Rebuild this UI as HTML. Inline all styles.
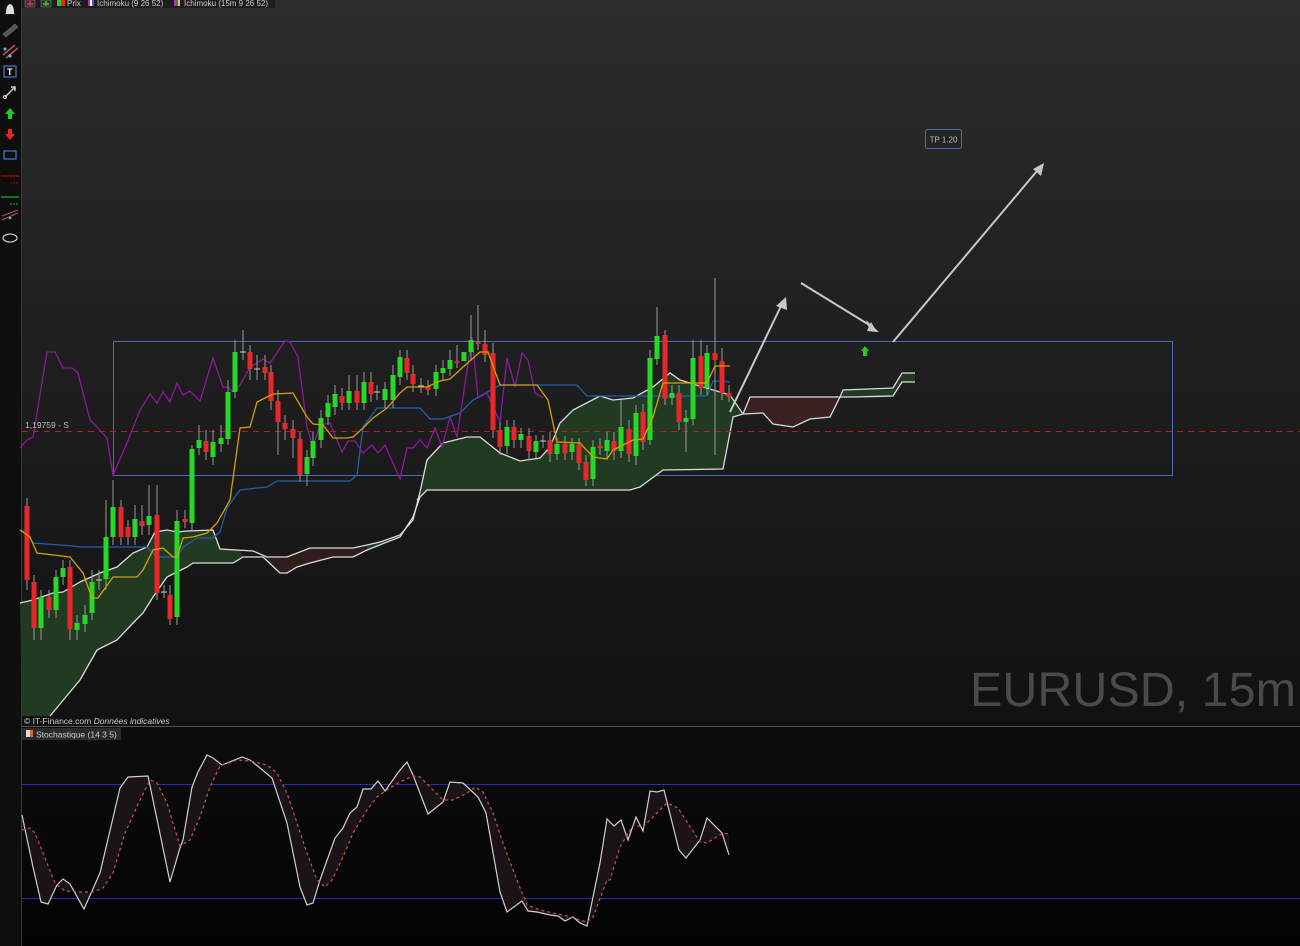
<!DOCTYPE html>
<html><head><meta charset="utf-8"><style>
html,body{margin:0;padding:0;background:#000;}
body{width:1300px;height:946px;overflow:hidden;position:relative;font-family:"Liberation Sans",sans-serif;}
svg{position:absolute;left:0;top:0;}
</style></head><body>
<svg width="1300" height="946" viewBox="0 0 1300 946" xmlns="http://www.w3.org/2000/svg" font-family="Liberation Sans, sans-serif">
<defs>
<linearGradient id="bg" x1="0" y1="0" x2="0" y2="1"><stop offset="0" stop-color="#2c2c2c"/><stop offset="1" stop-color="#111"/></linearGradient>
<linearGradient id="bg2" x1="0" y1="0" x2="0" y2="1"><stop offset="0" stop-color="#0d0d0d"/><stop offset="1" stop-color="#030303"/></linearGradient>
</defs>
<rect x="0" y="0" width="1300" height="726" fill="url(#bg)"/>
<rect x="0" y="727" width="1300" height="219" fill="url(#bg2)"/>
<line x1="22" y1="726.5" x2="1300" y2="726.5" stroke="#555" stroke-width="1"/>
<!-- left toolbar -->
<rect x="0" y="0" width="21" height="946" fill="#0e0e0e"/>
<line x1="21.5" y1="0" x2="21.5" y2="946" stroke="#3a3a3a"/>
<path d="M6 13 Q6 5 10 4 Q14 5 14 13 L15 14 L5 14 Z" fill="#ddd"/>
<path d="M3 34 L15 24 L18 27 L6 37 Z" fill="#555" stroke="#888" stroke-width="0.5"/>
<path d="M3 55 L15 45 M6 58 L18 48" stroke="#c05050" stroke-width="1.5"/><circle cx="5" cy="49" r="1.5" fill="#3cf"/><circle cx="10" cy="56" r="1.5" fill="#3cf"/>
<rect x="4" y="66" width="12" height="11" fill="none" stroke="#4a78c8" stroke-width="1.2"/><text x="7" y="75" font-size="9" font-weight="bold" fill="#fff">T</text>
<path d="M5 97 L15 87 M11 87 L15 87 L15 91" stroke="#ccc" stroke-width="1.5" fill="none"/><circle cx="5" cy="97" r="1.5" fill="none" stroke="#ccc"/>
<path d="M10 108 L15 114 L12 114 L12 119 L8 119 L8 114 L5 114 Z" fill="#2c2"/>
<path d="M10 140 L15 134 L12 134 L12 129 L8 129 L8 134 L5 134 Z" fill="#e22"/>
<rect x="4" y="151" width="12" height="8" fill="none" stroke="#4a78c8" stroke-width="1.2"/>
<line x1="1" y1="176" x2="19" y2="176" stroke="#b00" stroke-width="1.2"/><line x1="10" y1="183" x2="19" y2="183" stroke="#b00" stroke-dasharray="2,1"/>
<line x1="1" y1="197" x2="19" y2="197" stroke="#2a2" stroke-width="1.2"/><line x1="10" y1="204" x2="19" y2="204" stroke="#2a2" stroke-dasharray="2,1"/>
<path d="M2 220 L18 213 M2 216 L18 210" stroke="#c05050" stroke-width="1"/><circle cx="10" cy="218" r="1.3" fill="#3cf"/>
<ellipse cx="10" cy="238" rx="7" ry="4" fill="none" stroke="#ccc" stroke-width="1.2"/>
<!-- top tabs -->
<rect x="22" y="0" width="253" height="8" fill="#1d1d1d"/>
<rect x="25" y="0" width="10" height="7" fill="#333" stroke="#777" stroke-width="0.6"/><path d="M27 4 L33 4 M30 1 L30 6" stroke="#e33" stroke-width="1.4"/>
<rect x="41" y="0" width="10" height="7" fill="#333" stroke="#777" stroke-width="0.6"/><path d="M43 4 L49 4 M46 1 L46 6" stroke="#3c3" stroke-width="1.4"/>
<rect x="57" y="0" width="4" height="6" fill="#2c2"/><rect x="61" y="0" width="4" height="6" fill="#e22"/>
<text x="67" y="6" font-size="8" fill="#ccc">Prix</text>
<rect x="88" y="0" width="2" height="6" fill="#c2c"/><rect x="90" y="0" width="2" height="6" fill="#fff"/><rect x="92" y="0" width="2" height="6" fill="#36c"/>
<text x="97" y="6" font-size="8" fill="#ccc">Ichimoku (9 26 52)</text>
<rect x="174" y="0" width="2" height="6" fill="#c2c"/><rect x="176" y="0" width="2" height="6" fill="#36c"/><rect x="178" y="0" width="2" height="6" fill="#fc0"/>
<text x="184" y="6" font-size="8" fill="#ccc">Ichimoku (15m 9 26 52)</text>
<!-- range box -->
<rect x="113.5" y="341.5" width="1059" height="134" fill="none" stroke="#4a6fb0" stroke-width="1"/>
<!-- cloud green main -->
<polygon fill="#223a22" points="20,603 33,600 53,593 63,592 80,582 100,573 117,567 133,553 147,547 155,532 167,530 177,532 187,531 213,530 220,549 240,550 243,557 233,563 193,563 187,567 167,577 153,597 143,613 133,623 117,640 97,650 80,680 50,716 22,716"/>
<polygon fill="#2f1c1c" points="253,551 267,557 287,557 310,548 353,548 367,545 367,550 353,557 333,557 310,563 297,567 287,573 280,573 263,557"/>
<polygon fill="#223a22" points="367,545 380,542 400,535 413,520 420,492 427,460 443,443 467,437 480,437 500,453 520,461 540,458 550,447 560,423 573,410 600,396 613,400 633,398 653,387 670,373 680,380 693,384 730,395 743,414 733,417 723,469 663,470 640,487 630,490 427,490 417,500 413,517 400,537 367,550"/>
<polygon fill="#3a2222" points="750,397 840,397 830,417 810,419 793,427 773,424 763,413 743,413"/>
<polygon fill="#223a22" points="843,390 893,388 902,373 915,373 915,382 902,382 893,396 853,397 840,397"/>
<g fill="none" stroke="#dcdcdc" stroke-width="1.3">
<polyline points="20,603 33,600 53,593 63,592 80,582 100,573 117,567 133,553 147,547 155,532 167,530 177,532 187,531 213,530 220,549 253,551 267,557 287,557 310,548 353,548 367,545 380,542 400,535 413,520 420,492 427,460 443,443 467,437 480,437 500,453 520,461 540,458 550,447 560,423 573,410 600,396 613,400 633,398 653,387 670,373 680,380 693,384 730,395 743,414 763,413 773,424 793,427 810,419 830,417 840,397 843,390 893,388 902,373 915,373"/>
<polyline points="50,716 80,680 97,650 117,640 133,623 143,613 153,597 167,577 187,567 193,563 233,563 243,557 263,557 280,573 287,573 297,567 310,563 333,557 353,557 367,550 400,537 413,517 420,497 417,500 427,490 630,490 640,487 663,470 723,469 733,417 743,414 750,397 840,397 853,397 893,396 902,382 915,382"/>
</g>
<!-- kijun -->
<polyline fill="none" stroke="#1f5fb0" stroke-width="1.3" points="20,530 27,532 33,543 73,546 80,547 147,547 157,557 177,557 183,547 197,538 213,538 220,532 227,508 240,490 257,488 267,487 277,481 350,481 357,475 363,427 377,408 420,408 430,419 443,419 460,413 473,400 500,385 577,385 587,396 707,396 713,381 730,382"/>
<!-- chikou -->
<polyline fill="none" stroke="#8a1a9a" stroke-width="1.3" points="20,448 27,440 33,437 47,352 55,352 63,368 72,368 78,373 90,420 97,427 107,438 113,475 127,443 140,410 150,394 157,403 163,392 170,402 177,383 183,395 190,391 200,401 213,358 223,387 228,387 233,392 240,385 250,367 257,363 263,359 270,363 285,341 290,342 298,357 307,427 313,447 320,425 330,423 342,452 348,441 355,441 363,453 372,445 378,453 385,445 400,479 407,448 413,448 420,440 427,448 435,428 442,447 450,417 457,437 472,337 478,398 487,393 500,422 507,358 515,387 522,353 528,360 535,393 543,398"/>
<!-- dashed level -->
<line x1="22" y1="431.5" x2="1300" y2="431.5" stroke="#b02020" stroke-dasharray="6,5" stroke-width="1"/>
<text x="25" y="428" font-size="8.5" fill="#bbb">1,19759 - S</text>
<!-- candles -->
<g stroke="#999" stroke-width="1">
<path d="M27 498V590M34 575V640M41 590V640M49 590V618M56 570V618M63 560V585M70 560V640M77 615V640M85 605V632M92 570V620M99 570V590M106 500V590M113 480V545M121 500V545M128 520V545M135 505V545M142 505V535M149 485V535M157 485V600M164 585V598M170 585V625M177 510V625M185 510V528M192 445V530M199 425V455M206 430V460M213 430V465M221 425V452M228 380V445M235 340V398M243 330V360M250 345V380M257 355V380M265 355V380M271 365V410M278 390V455M285 415V440M293 420V458M300 432V482M307 450V486M313 432V466M321 410V448M328 395V425M335 385V415M342 388V410M349 375V410M357 375V410M364 372V410M371 372V402M377 385V400M385 382V408M393 365V408M400 350V385M407 350V380M413 365V392M421 378V393M428 380V395M436 365V396M443 360V380M450 350V376M457 345V368M471 315V360M478 305V350M485 330V362M493 343V438M500 422V455M507 420V454M514 420V448M521 428V448M529 428V460M536 435V460M543 435V448M550 432V462M557 438V460M565 436V460M572 438V460M579 438V470M586 455V486M593 440V486M600 438V455M607 432V458M614 432V460M621 400V458M629 420V462M636 405V465M643 404V450M650 350V445M657 307V365M665 330V405M672 385V405M679 385V430M686 410V452M693 340V425M701 340V395M707 345V395M715 278V455M722 348V400M729 385V402"/>
</g>
<g fill="#e82828">
<rect x="24.5" y="506" width="5" height="74"/><rect x="31.5" y="582" width="5" height="46"/><rect x="46.5" y="597" width="5" height="13"/><rect x="67.5" y="567" width="5" height="62"/><rect x="118.5" y="507" width="5" height="30"/><rect x="125.5" y="527" width="5" height="10"/><rect x="139.5" y="521" width="5" height="5"/><rect x="154.5" y="515" width="5" height="78"/><rect x="167.5" y="595" width="5" height="24"/><rect x="182.5" y="519" width="5" height="3"/><rect x="203.5" y="441" width="5" height="11"/><rect x="247.5" y="352" width="5" height="17"/><rect x="262.5" y="367" width="5" height="6"/><rect x="268.5" y="372" width="5" height="29"/><rect x="275.5" y="401" width="5" height="21"/><rect x="282.5" y="423" width="5" height="6"/><rect x="290.5" y="429" width="5" height="9"/><rect x="297.5" y="439" width="5" height="36"/><rect x="339.5" y="396" width="5" height="7"/><rect x="354.5" y="391" width="5" height="12"/><rect x="368.5" y="382" width="5" height="12"/><rect x="404.5" y="358" width="5" height="15"/><rect x="410.5" y="374" width="5" height="10"/><rect x="425.5" y="386" width="5" height="4"/><rect x="454.5" y="361" width="5" height="2"/><rect x="475.5" y="342" width="5" height="2"/><rect x="482.5" y="344" width="5" height="11"/><rect x="490.5" y="353" width="5" height="77"/><rect x="497.5" y="430" width="5" height="17"/><rect x="511.5" y="427" width="5" height="13"/><rect x="526.5" y="436" width="5" height="15"/><rect x="547.5" y="440" width="5" height="14"/><rect x="562.5" y="444" width="5" height="9"/><rect x="576.5" y="445" width="5" height="18"/><rect x="583.5" y="462" width="5" height="18"/><rect x="597.5" y="446" width="5" height="2"/><rect x="611.5" y="441" width="5" height="10"/><rect x="626.5" y="429" width="5" height="25"/><rect x="640.5" y="412" width="5" height="30"/><rect x="662.5" y="335" width="5" height="64"/><rect x="676.5" y="393" width="5" height="29"/><rect x="698.5" y="356" width="5" height="32"/><rect x="712.5" y="353" width="5" height="7"/><rect x="719.5" y="361" width="5" height="32"/><rect x="726.5" y="393" width="5" height="4"/>
</g>
<g fill="#28d828">
<rect x="38.5" y="597" width="5" height="31"/><rect x="53.5" y="577" width="5" height="33"/><rect x="60.5" y="568" width="5" height="9"/><rect x="74.5" y="623" width="5" height="7"/><rect x="82.5" y="615" width="5" height="9"/><rect x="89.5" y="582" width="5" height="31"/><rect x="103.5" y="537" width="5" height="42"/><rect x="110.5" y="507" width="5" height="30"/><rect x="132.5" y="519" width="5" height="18"/><rect x="146.5" y="516" width="5" height="9"/><rect x="174.5" y="521" width="5" height="96"/><rect x="189.5" y="449" width="5" height="74"/><rect x="196.5" y="440" width="5" height="8"/><rect x="210.5" y="442" width="5" height="15"/><rect x="218.5" y="438" width="5" height="6"/><rect x="225.5" y="392" width="5" height="47"/><rect x="232.5" y="352" width="5" height="40"/><rect x="304.5" y="457" width="5" height="17"/><rect x="310.5" y="441" width="5" height="17"/><rect x="318.5" y="418" width="5" height="22"/><rect x="325.5" y="403" width="5" height="14"/><rect x="332.5" y="394" width="5" height="13"/><rect x="346.5" y="391" width="5" height="12"/><rect x="361.5" y="382" width="5" height="21"/><rect x="382.5" y="389" width="5" height="11"/><rect x="390.5" y="375" width="5" height="25"/><rect x="397.5" y="357" width="5" height="20"/><rect x="433.5" y="372" width="5" height="17"/><rect x="440.5" y="368" width="5" height="5"/><rect x="447.5" y="360" width="5" height="9"/><rect x="461.5" y="352" width="5" height="9"/><rect x="468.5" y="340" width="5" height="12"/><rect x="504.5" y="427" width="5" height="19"/><rect x="518.5" y="434" width="5" height="6"/><rect x="533.5" y="441" width="5" height="11"/><rect x="554.5" y="444" width="5" height="10"/><rect x="569.5" y="444" width="5" height="8"/><rect x="590.5" y="447" width="5" height="32"/><rect x="604.5" y="440" width="5" height="11"/><rect x="618.5" y="427" width="5" height="24"/><rect x="633.5" y="413" width="5" height="43"/><rect x="647.5" y="358" width="5" height="82"/><rect x="654.5" y="336" width="5" height="23"/><rect x="669.5" y="393" width="5" height="5"/><rect x="683.5" y="418" width="5" height="4"/><rect x="690.5" y="358" width="5" height="61"/><rect x="704.5" y="353" width="5" height="35"/>
</g>
<g stroke="#ccc" stroke-width="1"><path d="M96 580H102M161 592H167M240 352H246M254 369H260M374 392H380M418 386H424M540 441H546"/></g>
<!-- tenkan -->
<polyline fill="none" stroke="#d4a000" stroke-width="1.3" points="20,530 30,537 37,553 70,557 83,573 92,598 98,598 113,577 137,577 143,570 153,550 163,548 173,557 177,557 183,538 193,537 207,533 217,523 230,500 240,428 250,427 257,402 273,394 293,393 307,417 313,424 323,425 333,438 347,438 353,437 363,428 373,418 387,408 400,393 407,387 427,387 440,381 450,379 463,367 480,352 488,352 500,385 537,385 548,400 557,442 580,443 593,457 607,459 613,450 633,440 643,439 653,417 663,383 707,383 715,366 730,366"/>
<!-- arrows -->
<g stroke="#c8c8c8" stroke-width="2" fill="#c8c8c8">
<line x1="730" y1="412" x2="781" y2="306"/><polygon points="786,297 776,306 787,310" stroke-width="0"/>
<line x1="801" y1="283" x2="871" y2="326"/><polygon points="879,332 866,320 870,331" stroke-width="0"/>
<polygon points="877,332 867,331 871,322" stroke-width="0"/>
<line x1="893" y1="342" x2="1037" y2="171"/><polygon points="1044,163 1033,169 1041,176" stroke-width="0"/>
</g>
<path d="M865 346 L869 351 L867 351 L867 356 L863 356 L863 351 L861 351 Z" fill="#2c2"/>
<rect x="925.5" y="129.5" width="36" height="19" rx="2" fill="#242424" stroke="#4a6fb0" stroke-width="1"/>
<text x="943.5" y="142.5" font-size="8" fill="#bbb" text-anchor="middle">TP 1.20</text>
<text x="970" y="706" font-size="48" fill="#4a4a4a" textLength="326" lengthAdjust="spacingAndGlyphs">EURUSD, 15m</text>
<text x="24" y="724" font-size="8.5" fill="#ccc">© IT-Finance.com <tspan font-style="italic">Données indicatives</tspan></text>
<!-- stochastic -->
<rect x="22" y="728" width="99" height="12" fill="#2a2a2a"/>
<rect x="26" y="730" width="4" height="7" fill="#ddd"/><rect x="30" y="730" width="3" height="7" fill="#e55"/>
<text x="36" y="737.5" font-size="8.5" fill="#ccc">Stochastique (14 3 5)</text>
<line x1="22" y1="784.5" x2="1300" y2="784.5" stroke="#2a2ab8" stroke-width="1"/>
<line x1="22" y1="898.5" x2="1300" y2="898.5" stroke="#2a2ab8" stroke-width="1"/>
<polygon fill="#1a1318" points="22,815 33,867 41,902 48,904 57,885 63,879 70,884 84,909 100,873 120,788 128,777 148,776 170,882 180,848 183,840 192,787 198,772 207,755 213,758 222,765 242,757 250,760 260,768 272,778 287,823 300,887 307,905 313,903 320,880 335,838 343,828 350,813 357,807 363,789 371,789 378,781 385,791 400,770 407,762 413,775 428,814 443,802 450,782 463,783 478,797 486,813 500,892 507,912 522,901 528,911 537,912 550,915 558,916 565,921 573,917 580,923 587,926 600,863 607,819 614,826 621,820 628,840 636,817 643,831 650,791 657,792 664,790 679,850 686,858 700,840 707,818 722,833 729,855 729,834 723,833 707,843 700,842 678,808 667,803 643,827 633,825 620,847 610,880 607,880 593,917 587,922 567,916 553,913 540,910 527,905 513,870 503,843 493,813 483,792 475,787 467,793 453,800 443,800 433,790 420,777 413,776 400,782 387,790 377,797 367,810 353,833 343,857 332,880 325,887 317,880 307,853 297,823 287,793 277,773 267,765 250,761 237,760 220,766 210,787 200,817 190,840 180,846 167,803 157,783 150,780 140,800 125,833 113,873 103,888 93,892 80,892 65,891 55,883 35,833 30,828 22,830"/>
<polyline fill="none" stroke="#cfcfcf" stroke-width="1.2" points="22,815 33,867 41,902 48,904 57,885 63,879 70,884 84,909 100,873 120,788 128,777 148,776 170,882 180,848 183,840 192,787 198,772 207,755 213,758 222,765 242,757 250,760 260,768 272,778 287,823 300,887 307,905 313,903 320,880 335,838 343,828 350,813 357,807 363,789 371,789 378,781 385,791 400,770 407,762 413,775 428,814 443,802 450,782 463,783 478,797 486,813 500,892 507,912 522,901 528,911 537,912 550,915 558,916 565,921 573,917 580,923 587,926 600,863 607,819 614,826 621,820 628,840 636,817 643,831 650,791 657,792 664,790 679,850 686,858 700,840 707,818 722,833 729,855"/>
<polyline fill="none" stroke="#d05050" stroke-width="1.2" stroke-dasharray="3,3" points="22,830 30,828 35,833 55,883 65,891 80,892 93,892 103,888 113,873 125,833 140,800 150,780 157,783 167,803 180,846 190,840 200,817 210,787 220,766 237,760 250,761 267,765 277,773 287,793 297,823 307,853 317,880 325,887 332,880 343,857 353,833 367,810 377,797 387,790 400,782 413,776 420,777 433,790 443,800 453,800 467,793 475,787 483,792 493,813 503,843 513,870 527,905 540,910 553,913 567,916 587,922 593,917 607,880 610,880 620,847 633,825 643,827 667,803 678,808 700,842 707,843 723,833 729,834"/>
</svg>
</body></html>
